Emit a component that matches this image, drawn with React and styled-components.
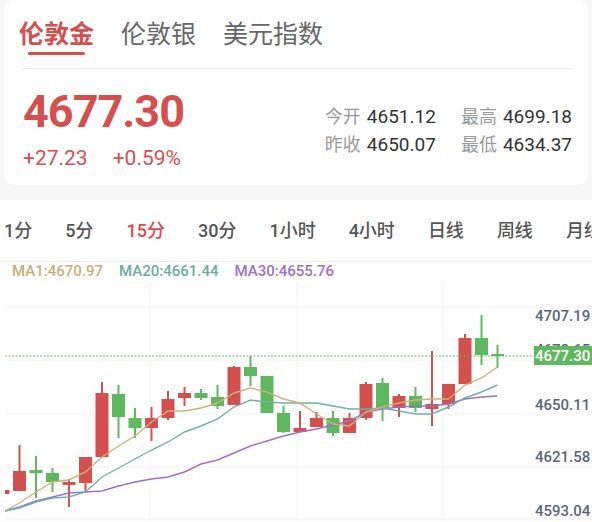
import React, { useState } from "react";
import styled, { createGlobalStyle } from "styled-components";

const GlobalStyle = createGlobalStyle`
  body {
    margin: 0;
    background: #f6f6f6;
    font-family: Roboto, "Noto Sans CJK SC", sans-serif;
  }
`;

const RED = "#d3504e";
const GREEN = "#5fb760";

const Page = styled.div`
  width: 592px;
  height: 522px;
  overflow: hidden;
  background: #f6f6f6;
`;

const Card = styled.div`
  margin: 0 4px;
  background: #fff;
  border-radius: 10px;
`;

const TabBar = styled.div`
  display: flex;
  gap: 27px;
  height: 68px;
  box-sizing: border-box;
  padding: 17px 0 0 15px;
`;

const Tab = styled.div`
  display: flex;
  flex-direction: column;
  align-items: center;
  font-family: "Noto Sans CJK SC", sans-serif;
  font-size: 25px;
  line-height: 30px;
  color: ${({ active }) => (active ? RED : "#666")};
  font-weight: ${({ active }) => (active ? 700 : 400)};
`;

const TabLine = styled.div`
  width: 57px;
  height: 3px;
  margin-top: 5px;
  border-radius: 2px;
  background: ${RED};
`;

const Divider = styled.div`
  height: 1px;
  margin: 0 15px 0 18px;
  background: #ececec;
`;

const Quote = styled.div`
  display: flex;
  justify-content: space-between;
  align-items: flex-start;
  padding: 22px 16px 15px 19px;
`;

const BigPrice = styled.div`
  font-size: 45px;
  line-height: 42px;
  font-weight: 700;
  letter-spacing: -1px;
  color: ${RED};
`;

const ChangeRow = styled.div`
  display: flex;
  gap: 25px;
  margin-top: 13px;
  font-size: 21px;
  line-height: 24px;
  color: ${RED};
`;

const Stats = styled.div`
  display: grid;
  grid-template-columns: auto auto;
  column-gap: 25px;
  margin-top: 11px;
  font-size: 18px;
  line-height: 26px;
`;

const Stat = styled.div`
  display: flex;
  align-items: baseline;
  gap: 6px;
`;

const StatLabel = styled.span`
  font-family: "Noto Sans CJK SC", sans-serif;
  color: #9a9a9a;
`;

const StatValue = styled.span`
  font-size: 19px;
  color: #333;
`;

const Periods = styled.div`
  margin-top: 15px;
  display: flex;
  gap: 33px;
  height: 62px;
  box-sizing: border-box;
  padding: 0 0 4px 4px;
  align-items: center;
  background: #fff;
  border-bottom: 1px solid #f0f0f0;
  white-space: nowrap;
  overflow: hidden;
`;

const Period = styled.div`
  flex: none;
  font-size: 18px;
  font-weight: 500;
  color: ${({ active }) => (active ? "#d94a4a" : "#555")};
`;

const ChartPanel = styled.div`
  background: #fff;
`;

const Legend = styled.div`
  display: flex;
  gap: 16px;
  padding: 0 12px;
  height: 20px;
  font-size: 15px;
  line-height: 18px;
  font-weight: 500;
`;

const LegendItem = styled.span`
  color: ${({ color }) => color};
`;

const AxisText = styled.text`
  font-family: Roboto, sans-serif;
  font-size: 15px;
  font-weight: 500;
  fill: ${({ light }) => (light ? "#fff" : "#5b6678")};
`;

// [centerX, bodyTop, bodyBottom, wickTop, wickBottom, rising]
const candles = [
  [3, 491, 495, 491, 495, 1],
  [19.5, 472, 492, 446, 492, 1],
  [36, 471, 474, 457, 499, 0],
  [52.5, 474, 483, 469, 493, 0],
  [69, 483, 486, 480, 508, 1],
  [85.5, 458, 484, 458, 493, 1],
  [102, 394, 458, 383, 458, 1],
  [118.5, 395, 418, 386, 439, 0],
  [135, 419, 429, 409, 439, 0],
  [151.5, 419, 429, 408, 442, 1],
  [168, 400, 419, 392, 421, 1],
  [184.5, 394, 399, 388, 407, 1],
  [201, 394, 399, 390, 401, 0],
  [217.5, 398, 407, 386, 410, 0],
  [234, 368, 406, 367, 406, 1],
  [250.5, 368, 377, 357, 387, 0],
  [267, 377, 414, 377, 414, 0],
  [283.5, 414, 433, 407, 434, 0],
  [300, 429, 433, 412, 433, 1],
  [316.5, 419, 428, 413, 428, 1],
  [333, 419, 434, 412, 437, 0],
  [349.5, 419, 434, 414, 434, 1],
  [366, 385, 419, 383, 421, 1],
  [382.5, 384, 409, 379, 422, 0],
  [399, 397, 409, 395, 418, 1],
  [415.5, 397, 409, 388, 413, 0],
  [432, 405, 410, 352, 427, 1],
  [448.5, 385, 405, 385, 410, 1],
  [465, 339, 385, 335, 385, 1],
  [481.5, 339, 356, 316, 366, 0],
  [497.5, 355, 357, 346, 369, 0],
];

const xs = [5, 19.5, 36, 52.5, 69, 85.5, 102, 118.5, 135, 151.5, 168, 184.5, 201, 217.5, 234, 250.5,
  267, 283.5, 300, 316.5, 333, 349.5, 366, 382.5, 399, 415.5, 432, 448.5, 465, 481.5, 497.5];

const ma1 = [512, 504, 493, 483, 481, 473, 458, 447, 437, 423, 412, 412, 409, 404, 394, 389,
  393, 400, 404, 415, 425, 427, 413, 408, 404, 401, 400, 400, 386, 379, 368];
const ma20 = [512, 509, 503, 499, 498, 493, 478, 469, 460, 451, 443, 433, 427, 420, 408, 401,
  403, 404, 404, 404, 407, 410, 410, 409, 412, 415, 415, 408, 399, 393, 386];
const ma30 = [512, 508, 502, 498, 494, 493, 492, 487, 483, 480, 478, 473, 465, 461, 454, 447,
  442, 437, 433, 430, 426, 422, 413, 410, 408, 407, 407, 405, 400, 398, 397];

const toPoints = (ys) => ys.map((y, i) => `${xs[i]},${y}`).join(" ");

const axisLabels = [
  ["4707.19", 317],
  ["4678.65", 351],
  ["4650.11", 406],
  ["4621.58", 458],
  ["4593.04", 512],
];

const KChart = () => (
  <svg width="592" height="239" viewBox="0 283 592 239" style={{ display: "block" }}>
    <defs>
      <clipPath id="plot">
        <rect x="5" y="283" width="587" height="239" />
      </clipPath>
    </defs>
    {[308, 361, 415, 468, 520].map((y) => (
      <line key={y} x1="5" x2="592" y1={y} y2={y} stroke="#f3f3f3" strokeWidth="1" />
    ))}
    {[150, 297, 443].map((x) => (
      <line key={x} x1={x} x2={x} y1="283" y2="522" stroke="#f3f3f3" strokeWidth="1" />
    ))}
    {axisLabels.map(([t, y]) => (
      <AxisText key={t} x="535" y={y} dominantBaseline="central">
        {t}
      </AxisText>
    ))}
    <g clipPath="url(#plot)">
      {candles.map(([x, bt, bb, wt, wb, up], i) => {
        const c = up ? RED : GREEN;
        return (
          <g key={i}>
            <rect x={x - 1} y={wt} width="2" height={wb - wt} fill={c} />
            <rect x={x - 6.5} y={bt} width="13" height={Math.max(bb - bt, 2)} fill={c} />
          </g>
        );
      })}
      <polyline points={toPoints(ma30)} fill="none" stroke="#9b6ed0" strokeWidth="1.4" />
      <polyline points={toPoints(ma20)} fill="none" stroke="#6db2a4" strokeWidth="1.4" />
      <polyline points={toPoints(ma1)} fill="none" stroke="#c9b27c" strokeWidth="1.4" />
    </g>
    <line x1="5" x2="534" y1="357" y2="357" stroke={GREEN} strokeWidth="1.2" strokeDasharray="2 1.5" />
    <rect x="534" y="347" width="58" height="19" fill={GREEN} />
    <AxisText light x="535" y="357" dominantBaseline="central" fontWeight="700">
      4677.30
    </AxisText>
  </svg>
);

const periods = ["1分", "5分", "15分", "30分", "1小时", "4小时", "日线", "周线", "月线"];

export default function App() {
  const [market, setMarket] = useState("伦敦金");
  const [period, setPeriod] = useState("15分");

  return (
    <Page>
      <GlobalStyle />
      <Card>
        <TabBar>
          {["伦敦金", "伦敦银", "美元指数"].map((m) => (
            <Tab key={m} active={m === market} onClick={() => setMarket(m)}>
              {m}
              {m === market && <TabLine />}
            </Tab>
          ))}
        </TabBar>
        <Divider />
        <Quote>
          <div>
            <BigPrice>4677.30</BigPrice>
            <ChangeRow>
              <span>+27.23</span>
              <span>+0.59%</span>
            </ChangeRow>
          </div>
          <Stats>
            <Stat><StatLabel>今开</StatLabel><StatValue>4651.12</StatValue></Stat>
            <Stat><StatLabel>最高</StatLabel><StatValue>4699.18</StatValue></Stat>
            <Stat><StatLabel>昨收</StatLabel><StatValue>4650.07</StatValue></Stat>
            <Stat><StatLabel>最低</StatLabel><StatValue>4634.37</StatValue></Stat>
          </Stats>
        </Quote>
      </Card>
      <Periods>
        {periods.map((p) => (
          <Period key={p} active={p === period} onClick={() => setPeriod(p)}>
            {p}
          </Period>
        ))}
      </Periods>
      <ChartPanel>
        <Legend>
          <LegendItem color="#c4ae78">MA1:4670.97</LegendItem>
          <LegendItem color="#6aada0">MA20:4661.44</LegendItem>
          <LegendItem color="#9a6fcf">MA30:4655.76</LegendItem>
        </Legend>
        <KChart />
      </ChartPanel>
    </Page>
  );
}
